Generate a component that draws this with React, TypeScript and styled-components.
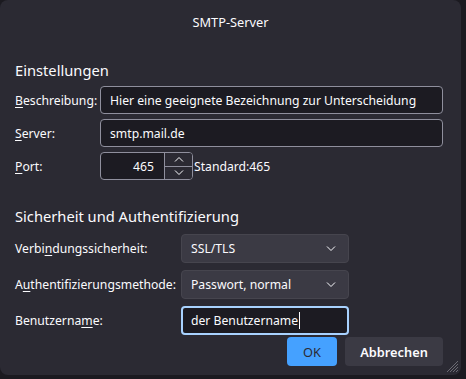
import React from 'react';
import styled, { createGlobalStyle } from 'styled-components';

const GlobalStyle = createGlobalStyle`
  html, body {
    margin: 0;
    padding: 0;
    background: #1b1a20;
  }
  body {
    font-family: "Noto Sans", "Open Sans", sans-serif;
    color: #fbfbfe;
  }
`;

const Window = styled.div`
  width: 461px;
  height: 375px;
  background: #2b2a33;
  border-radius: 8px;
  position: relative;
  display: flex;
  flex-direction: column;
  box-sizing: border-box;
  font-size: 12.2px;
`;

const TitleBar = styled.div`
  height: 42px;
  display: flex;
  align-items: center;
  justify-content: center;
  font-size: 12.8px;
  padding-top: 1px;
  box-sizing: border-box;
`;

const Body = styled.div`
  padding: 0 18px 0 15px;
  display: flex;
  flex-direction: column;
`;

const Heading = styled.div<{ $top: number }>`
  font-size: 14.7px;
  margin-top: ${(p) => p.$top}px;
  line-height: 22px;
`;

const Grid = styled.div<{ $col: number; $gap: number; $top: number }>`
  display: grid;
  grid-template-columns: ${(p) => p.$col}px 1fr;
  align-items: center;
  row-gap: ${(p) => p.$gap}px;
  margin-top: ${(p) => p.$top}px;
`;

const Label = styled.label`
  white-space: nowrap;
  u {
    text-decoration-thickness: 1px;
    text-underline-offset: 2px;
  }
`;

const TextBox = styled.div<{ $focus?: boolean; $width?: number }>`
  height: ${(p) => (p.$focus ? 29 : 28)}px;
  box-sizing: border-box;
  background: #1c1b22;
  border: ${(p) => (p.$focus ? '2px solid #a8d2ff' : '1px solid #8f8f9d')};
  border-radius: 4px;
  display: flex;
  align-items: center;
  padding-left: ${(p) => (p.$focus ? 8 : 9)}px;
  width: ${(p) => (p.$width ? `${p.$width}px` : 'auto')};
  white-space: nowrap;
  overflow: hidden;
`;

const Caret = styled.span`
  display: inline-block;
  width: 1px;
  height: 17px;
  background: #fbfbfe;
  margin-left: 1px;
`;

const PortRow = styled.div`
  display: flex;
  align-items: center;
`;

const PortBox = styled.div`
  width: 93px;
  height: 28px;
  box-sizing: border-box;
  background: #1c1b22;
  border: 1px solid #8f8f9d;
  border-radius: 4px;
  display: flex;
  overflow: hidden;
`;

const PortValue = styled.div`
  flex: 1;
  display: flex;
  align-items: center;
  justify-content: flex-end;
  padding-right: 10px;
`;

const Spinner = styled.div`
  width: 27px;
  display: flex;
  flex-direction: column;
  border-left: 1px solid #8f8f9d;
`;

const SpinButton = styled.div<{ $bottom?: boolean }>`
  flex: 1;
  display: flex;
  align-items: center;
  justify-content: center;
  border-top: ${(p) => (p.$bottom ? '1px solid #8f8f9d' : 'none')};
  background: #2b2a33;
`;

const Hint = styled.span`
  margin-left: 1px;
`;

const Select = styled.div`
  width: 168px;
  height: 29px;
  box-sizing: border-box;
  background: #3b3a44;
  border-radius: 4px;
  border: 1px solid #46454e;
  display: flex;
  align-items: center;
  justify-content: space-between;
  padding: 0 12px 0 9px;
`;

const Buttons = styled.div`
  display: flex;
  justify-content: flex-end;
  gap: 8px;
  margin-top: 2px;
`;

const Button = styled.div<{ $primary?: boolean; $width: number }>`
  width: ${(p) => p.$width}px;
  height: 29px;
  border-radius: 4px;
  display: flex;
  align-items: center;
  justify-content: center;
  font-size: 12.8px;
  font-weight: ${(p) => (p.$primary ? 400 : 600)};
  background: ${(p) => (p.$primary ? '#45a1ff' : '#3b3a44')};
  color: ${(p) => (p.$primary ? '#2b2a33' : '#fbfbfe')};
`;

const Grip = styled.svg`
  position: absolute;
  right: 2px;
  bottom: 2px;
`;

const Chevron = ({ up }: { up?: boolean }) => (
  <svg width="10" height="6" viewBox="0 0 10 6">
    <path
      d={up ? 'M1 5.5 L5 1.5 L9 5.5' : 'M1 0.5 L5 4.5 L9 0.5'}
      fill="none"
      stroke="#fbfbfe"
      strokeWidth="1"
    />
  </svg>
);

const App = () => (
  <>
    <GlobalStyle />
    <Window>
      <TitleBar>SMTP-Server</TitleBar>
      <Body>
        <Heading $top={17}>Einstellungen</Heading>
        <Grid $col={85} $gap={5} $top={5}>
          <Label><u>B</u>eschreibung:</Label>
          <TextBox>Hier eine geeignete Bezeichnung zur Unterscheidung</TextBox>
          <Label><u>S</u>erver:</Label>
          <TextBox>smtp.mail.de</TextBox>
          <Label><u>P</u>ort:</Label>
          <PortRow>
            <PortBox>
              <PortValue>465</PortValue>
              <Spinner>
                <SpinButton><Chevron up /></SpinButton>
                <SpinButton $bottom><Chevron /></SpinButton>
              </Spinner>
            </PortBox>
            <Hint>Standard:465</Hint>
          </PortRow>
        </Grid>
        <Heading $top={25}>Sicherheit und Authentifizierung</Heading>
        <Grid $col={166} $gap={7} $top={7}>
          <Label>Verbi<u>n</u>dungssicherheit:</Label>
          <Select>
            SSL/TLS
            <Chevron />
          </Select>
          <Label>A<u>u</u>thentifizierungsmethode:</Label>
          <Select>
            Passwort, normal
            <Chevron />
          </Select>
          <Label>Benutzerna<u>m</u>e:</Label>
          <TextBox $focus $width={168}>
            der Benutzername<Caret />
          </TextBox>
        </Grid>
        <Buttons>
          <Button $primary $width={50}>OK</Button>
          <Button $width={98}>Abbrechen</Button>
        </Buttons>
      </Body>
      <Grip width="13" height="13" viewBox="0 0 13 13">
        <path d="M12 1 L1 12 M12 4 L4 12 M12 7 L7 12 M12 10 L10 12" stroke="#6b6a73" strokeWidth="1" />
      </Grip>
    </Window>
  </>
);

export default App;
